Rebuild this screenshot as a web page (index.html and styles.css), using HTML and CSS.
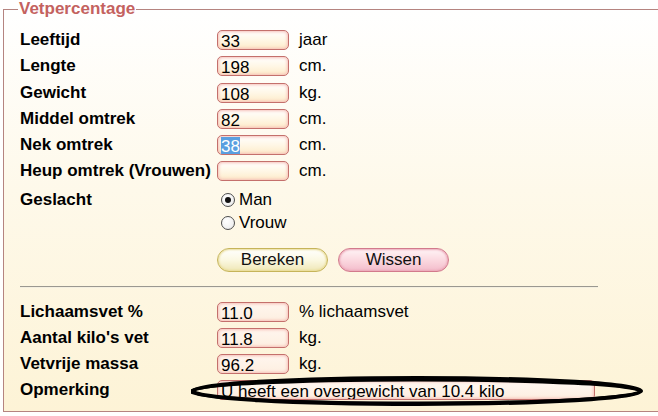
FILE: index.html
```html
<!DOCTYPE html>
<html>
<head>
<meta charset="utf-8">
<link rel="stylesheet" href="styles.css">
</head>
<body>
<fieldset class="box">
  <legend class="legend">Vetpercentage</legend>
  <div class="row"><span class="label">Leeftijd</span><span class="field">33</span><span class="unit">jaar</span></div>
  <div class="row"><span class="label">Lengte</span><span class="field">198</span><span class="unit">cm.</span></div>
  <div class="row"><span class="label">Gewicht</span><span class="field">108</span><span class="unit">kg.</span></div>
  <div class="row"><span class="label">Middel omtrek</span><span class="field">82</span><span class="unit">cm.</span></div>
  <div class="row"><span class="label">Nek omtrek</span><span class="field"><span class="sel">38</span></span><span class="unit">cm.</span></div>
  <div class="row"><span class="label">Heup omtrek (Vrouwen)</span><span class="field"></span><span class="unit">cm.</span></div>
  <div class="gender">
    <span class="label glabel">Geslacht</span>
    <div class="radios">
      <div class="radio"><span class="dot checked"></span>Man</div>
      <div class="radio"><span class="dot"></span>Vrouw</div>
    </div>
  </div>
  <div class="buttons">
    <span class="btn btn-calc">Bereken</span>
    <span class="btn btn-clear">Wissen</span>
  </div>
  <div class="divider"></div>
  <div class="row"><span class="label">Lichaamsvet %</span><span class="field out">11.0</span><span class="unit">% lichaamsvet</span></div>
  <div class="row"><span class="label">Aantal kilo's vet</span><span class="field out">11.8</span><span class="unit">kg.</span></div>
  <div class="row"><span class="label">Vetvrije massa</span><span class="field out">96.2</span><span class="unit">kg.</span></div>
  <div class="row remark">
    <span class="label">Opmerking</span>
    <span class="field wide">U heeft een overgewicht van 10.4 kilo</span>
    <svg class="circle" width="470" height="40" viewBox="0 0 470 40">
      <ellipse cx="226" cy="19" rx="224" ry="13" fill="none" stroke="#000" stroke-width="4"/>
      <ellipse cx="224" cy="19.5" rx="225" ry="11.5" fill="none" stroke="#000" stroke-width="3"/>
    </svg>
  </div>
</fieldset>
</body>
</html>
```

FILE: styles.css
```css
html, body {
  margin: 0;
  padding: 0;
  background: #ffffff;
  width: 658px;
  height: 416px;
  overflow: hidden;
}

body {
  font-family: "Liberation Sans", Arial, sans-serif;
  font-size: 17px;
  color: #000;
}

.box {
  margin: 0 -20px 0 3px;
  padding: 9px 0 7px 16px;
  border: 1px solid #b58480;
  background: linear-gradient(to bottom, #ffffff 0%, #fef9ea 45%, #fdf3d6 100%);
  min-width: 0;
}

.legend {
  font-weight: bold;
  font-size: 17px;
  line-height: 18px;
  color: #c4625f;
  padding: 0 1px;
  margin-left: -2px;
}

.row {
  display: grid;
  grid-template-columns: 187px 72px auto;
  column-gap: 10px;
  align-items: center;
  height: 26.25px;
  position: relative;
}

.label {
  font-weight: bold;
  line-height: 20px;
  white-space: nowrap;
}

.field {
  box-sizing: border-box;
  height: 20px;
  border: 1px solid #c4706c;
  border-radius: 5px;
  background: linear-gradient(to bottom, #ffffff 0%, #fff7e6 50%, #fdebc9 100%);
  box-shadow: inset 0 0 3px 1px #f6c0b8;
  padding: 0 0 0 3px;
  line-height: 21px;
  white-space: nowrap;
  overflow: hidden;
}

.field.out {
  background: linear-gradient(to bottom, #fff6ef 0%, #fdefe0 100%);
}

.sel {
  background: #5a9fe0;
  color: #ffffff;
}

.unit {
  line-height: 20px;
  white-space: nowrap;
}

.gender {
  display: grid;
  grid-template-columns: 197px auto;
  margin-top: 4px;
}

.glabel {
  line-height: 21px;
}

.radios {
  display: flex;
  flex-direction: column;
  padding-left: 4px;
}

.radio {
  display: flex;
  align-items: center;
  gap: 4px;
  height: 23px;
}

.dot {
  box-sizing: border-box;
  width: 14px;
  height: 14px;
  border: 1px solid #4d4d4d;
  border-radius: 50%;
  background: radial-gradient(circle at 40% 35%, #ffffff 0%, #f2f2f2 60%, #dcdcdc 100%);
  position: relative;
}

.dot.checked::after {
  content: "";
  position: absolute;
  left: 3px;
  top: 3px;
  width: 6px;
  height: 6px;
  border-radius: 50%;
  background: #111;
}

.buttons {
  display: flex;
  gap: 10px;
  margin: 13px 0 0 197px;
}

.btn {
  box-sizing: border-box;
  width: 111px;
  height: 24px;
  border-radius: 12px;
  text-align: center;
  line-height: 22px;
  color: #111;
}

.btn-calc {
  border: 1px solid #c6b45a;
  background: linear-gradient(to bottom, #ffffff 0%, #fbf8e2 50%, #efe7b6 100%);
  box-shadow: inset 0 0 2px 1px #e9dc98;
}

.btn-clear {
  border: 1px solid #d27a8c;
  background: linear-gradient(to bottom, #fff4f6 0%, #fbd9e0 50%, #f3bccb 100%);
  box-shadow: inset 0 0 2px 1px #eba8b8;
}

.divider {
  width: 578px;
  height: 1px;
  background: #9a9890;
  border-bottom: 1px solid #f4efe0;
  margin: 14px 0 11px 0;
}

.remark {
  grid-template-columns: 187px 378px;
}

.field.wide {
  background: linear-gradient(to bottom, #fff8f2 0%, #fdeee0 100%);
}

.circle {
  position: absolute;
  left: 171px;
  top: -5px;
  pointer-events: none;
}
```
